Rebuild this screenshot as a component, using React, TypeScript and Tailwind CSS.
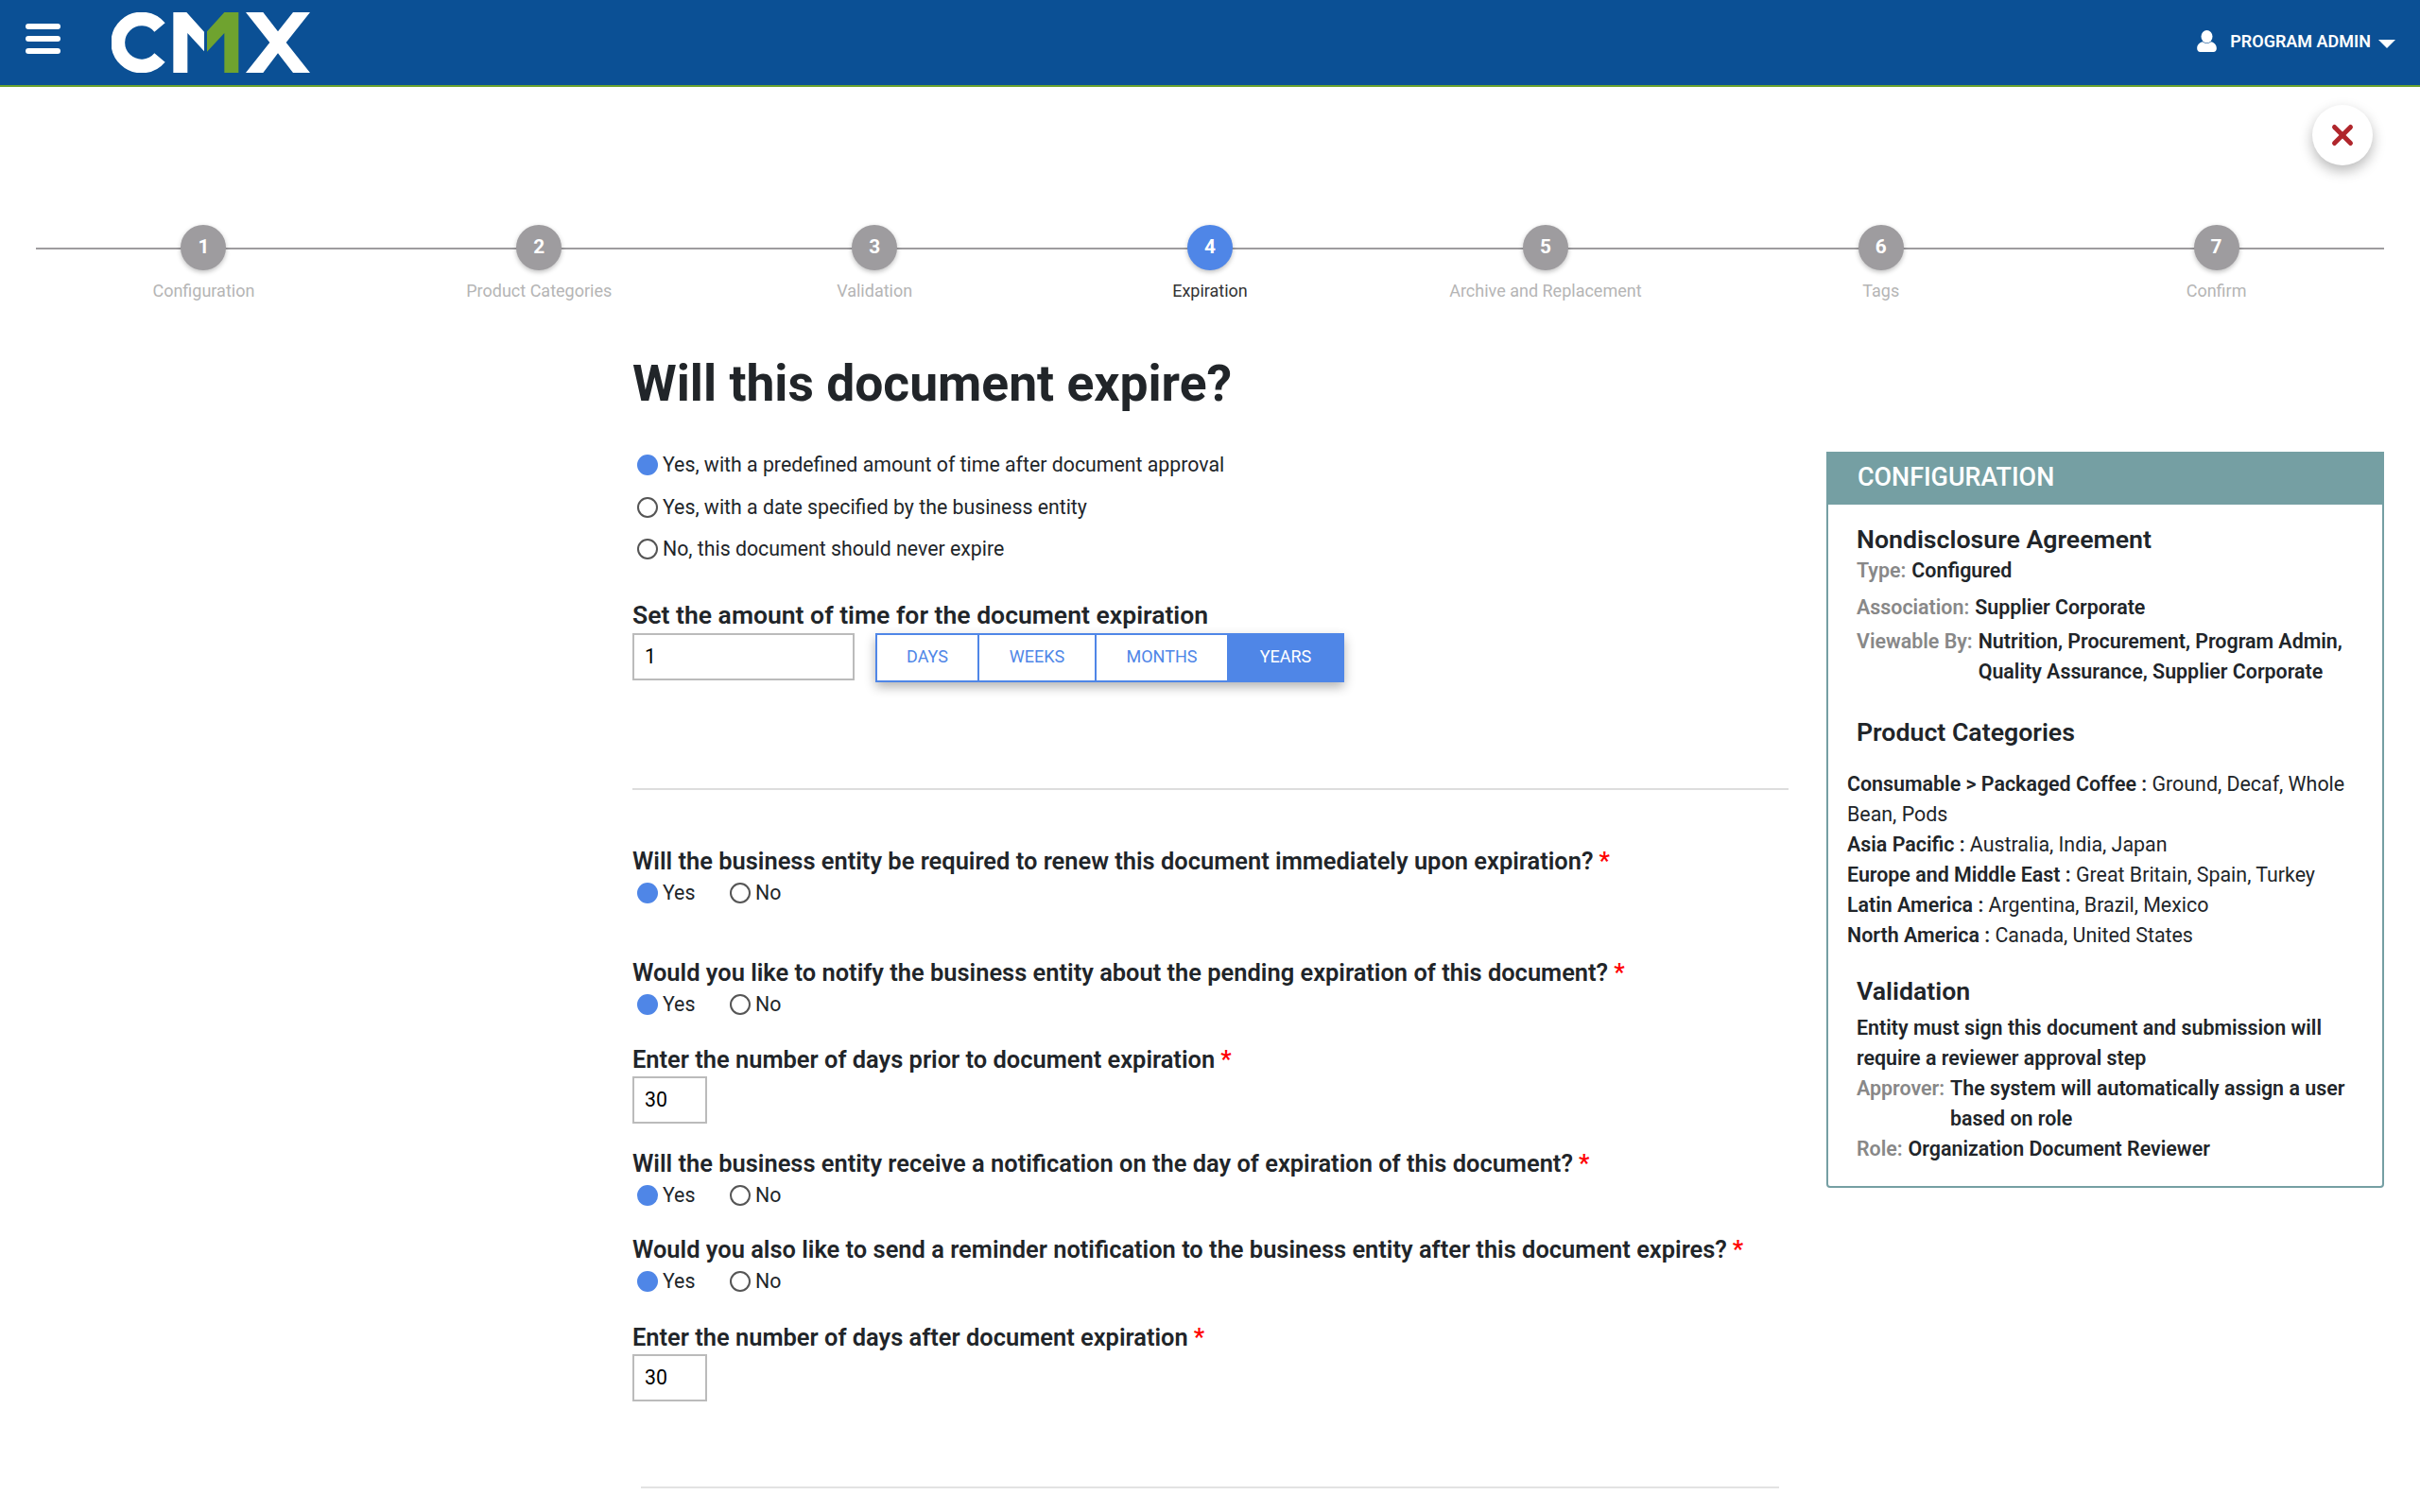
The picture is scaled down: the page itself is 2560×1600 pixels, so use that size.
import { X } from 'lucide-react'

const steps = [
  'Configuration',
  'Product Categories',
  'Validation',
  'Expiration',
  'Archive and Replacement',
  'Tags',
  'Confirm',
]

const expiryOptions = [
  'Yes, with a predefined amount of time after document approval',
  'Yes, with a date specified by the business entity',
  'No, this document should never expire',
]

const units = [
  { name: 'DAYS', width: 'w-[108px]' },
  { name: 'WEEKS', width: 'w-[124px]' },
  { name: 'MONTHS', width: 'w-[140px]' },
]

const categories = [
  { name: 'Asia Pacific :', values: 'Australia, India, Japan' },
  { name: 'Europe and Middle East :', values: 'Great Britain, Spain, Turkey' },
  { name: 'Latin America :', values: 'Argentina, Brazil, Mexico' },
  { name: 'North America :', values: 'Canada, United States' },
]

function Radio({ checked }: { checked?: boolean }) {
  return checked ? (
    <span className="w-[22px] h-[22px] rounded-full bg-[#4f86e7] shrink-0" />
  ) : (
    <span className="w-[22px] h-[22px] rounded-full border-2 border-[#555555] shrink-0" />
  )
}

function YesNo() {
  return (
    <div className="h-[31px] pt-[1px] flex items-center pl-[5px] text-[21.3px] text-[#212529]">
      <Radio checked />
      <span className="ml-[5px] w-[71px]">Yes</span>
      <Radio />
      <span className="ml-[5px]">No</span>
    </div>
  )
}

function Question({ text, className }: { text: string; className: string }) {
  return (
    <div className={`h-[37px] pt-[1px] flex items-center text-[25.45px] font-semibold text-[#212529] ${className}`}>
      {text}
      <span className="ml-[6px] text-[#ff0000]">*</span>
    </div>
  )
}

function DaysInput() {
  return (
    <div className="w-[79px] h-[50px] border-2 border-[#bbbbbb] flex items-center pl-[11px] text-[21.3px] text-black">
      30
    </div>
  )
}

function Logo() {
  return (
    <svg viewBox="0 0 630 192" className="w-[210px] h-[64px]">
      <path d="M153 48A75 75 0 1 0 153 144" fill="none" stroke="#ffffff" strokeWidth="44" />
      <polygon fill="#ffffff" points="196,0 238,0 294,62 294,124 241,66 241,192 196,192" />
      <polygon fill="#6fa32f" points="358,0 403,0 403,192 358,192 358,66 303,125 303,61" />
      <polygon
        fill="#ffffff"
        points="426,0 481,0 528,61 576,0 630,0 554,96 630,192 576,192 528,130 481,192 426,192 502,96"
      />
    </svg>
  )
}

function PersonIcon() {
  return (
    <svg viewBox="0 0 62 69" className="w-[21px] h-[23px]" fill="#ffffff">
      <ellipse cx="31" cy="20" rx="18" ry="20" />
      <path d="M0 58C0 46 8 39 18 37C25 43 37 43 44 37C54 39 62 46 62 58C62 65 58 69 52 69H10C4 69 0 65 0 58Z" />
    </svg>
  )
}

export default function App() {
  return (
    <div className="h-[1600px] overflow-hidden bg-white font-['Roboto',sans-serif]">
      <header className="h-[92px] bg-[#0b5095] border-b-2 border-[#6aa22f] flex items-center">
        <div className="ml-[27px] flex flex-col gap-[7px] -mt-[8px]">
          <div className="w-[37px] h-[6px] rounded-sm bg-white" />
          <div className="w-[37px] h-[6px] rounded-sm bg-white" />
          <div className="w-[37px] h-[6px] rounded-sm bg-white" />
        </div>
        <div className="ml-[54px] flex">
          <Logo />
        </div>
        <div className="ml-auto mr-[26px] flex items-center -mt-[3px] text-white text-[18px] font-semibold">
          <PersonIcon />
          <span className="ml-[14px] mt-[-1px]">PROGRAM ADMIN</span>
          <span className="ml-[8px] mt-[5px] w-0 h-0 border-x-[9px] border-x-transparent border-t-[9px] border-t-white" />
        </div>
      </header>

      <div className="flex justify-end pr-[50px] pt-[19px]">
        <button className="w-[64px] h-[64px] rounded-full bg-white shadow-[0_6px_14px_rgba(0,0,0,0.28)] flex items-center justify-center">
          <X size={34} strokeWidth={3.5} className="text-[#b0262c]" />
        </button>
      </div>

      <div className="relative mt-[63px] ml-[38px] w-[2484px] grid grid-cols-7">
        <div className="absolute left-0 right-0 top-[24px] h-[2px] bg-[#9e9c9f]" />
        {steps.map((step, i) => (
          <div key={step} className="relative flex flex-col items-center">
            <div
              className={`w-[48px] h-[48px] rounded-full flex items-center justify-center text-white text-[20.8px] font-bold shadow-[0_2px_5px_rgba(0,0,0,0.25)] ${
                i === 3 ? 'bg-[#4f86e7]' : 'bg-[#9e9c9f]'
              }`}
            >
              {i + 1}
            </div>
            <div className={`mt-[9px] h-[26px] leading-[26px] text-[18px] ${i === 3 ? 'text-[#333333]' : 'text-[#b5b5b5]'}`}>
              {step}
            </div>
          </div>
        ))}
      </div>

      <div className="mt-[52px] pl-[669px] flex items-start">
        <div className="w-[1223px] shrink-0">
          <h1 className="mt-[1px] h-[64px] leading-[64px] text-[53.4px] font-bold text-[#212529]">Will this document expire?</h1>

          <div className="mt-[32px] flex flex-col gap-[0.5px]">
            {expiryOptions.map((opt, i) => (
              <div key={opt} className="h-[44px] flex items-center pl-[5px] text-[21.3px] text-[#212529]">
                <Radio checked={i === 0} />
                <span className="ml-[5px]">{opt}</span>
              </div>
            ))}
          </div>

          <div className="mt-[30px] h-[36px] flex items-center text-[26.55px] font-semibold text-[#212529]">
            Set the amount of time for the document expiration
          </div>
          <div className="mt-[1px] flex items-start">
            <div className="w-[235px] h-[50px] border-2 border-[#bbbbbb] flex items-center pl-[11px] text-[21.3px] text-black">
              1
            </div>
            <div className="ml-[22px] flex h-[52px] rounded-sm shadow-[0_5px_12px_rgba(0,0,0,0.3)]">
              {units.map((u) => (
                <div
                  key={u.name}
                  className={`${u.width} pb-[3px] border-2 border-r-0 border-[#4f86e7] bg-white flex items-center justify-center text-[18px] text-[#4f86e7]`}
                >
                  {u.name}
                </div>
              ))}
              <div className="w-[124px] pb-[3px] bg-[#4f86e7] flex items-center justify-center text-[18px] text-white">
                YEARS
              </div>
            </div>
          </div>

          <div className="mt-[112px] border-t-2 border-[#dddddd]" />

          <Question className="mt-[56px]" text="Will the business entity be required to renew this document immediately upon expiration?" />
          <YesNo />
          <Question className="mt-[50px]" text="Would you like to notify the business entity about the pending expiration of this document?" />
          <YesNo />
          <Question className="mt-[24px]" text="Enter the number of days prior to document expiration" />
          <DaysInput />
          <Question className="mt-[23px]" text="Will the business entity receive a notification on the day of expiration of this document?" />
          <YesNo />
          <Question className="mt-[23px]" text="Would you also like to send a reminder notification to the business entity after this document expires?" />
          <YesNo />
          <Question className="mt-[25px]" text="Enter the number of days after document expiration" />
          <DaysInput />

          <div className="mt-[90px] ml-[9px] w-[1204px] border-t-2 border-[#e3e3e3]" />
        </div>

        <aside className="ml-[40px] mt-[105px] w-[590px] shrink-0 border-2 border-[#759fa3] rounded-b-[4px] text-[21.4px] leading-[32px] text-[#212529]">
          <div className="-mx-[2px] -mt-[2px] h-[56px] pb-[2px] bg-[#759fa3] flex items-center pl-[33px] text-[26.9px] font-medium text-white">
            CONFIGURATION
          </div>
          <div className="pl-[30px] pr-[28px] pt-[19px] pb-[23px] font-semibold">
            <h3 className="h-[36px] flex items-center text-[26.7px]">Nondisclosure Agreement</h3>
            <div className="h-[30px] flex items-center">
              <span className="text-[#888888]">Type:</span>
              <span className="ml-[6px]">Configured</span>
            </div>
            <div className="mt-[8px] flex">
              <span className="text-[#888888]">Association:</span>
              <span className="ml-[6px]">Supplier Corporate</span>
            </div>
            <div className="mt-[4px] flex">
              <span className="text-[#888888] shrink-0">Viewable By:</span>
              <span className="ml-[6px]">Nutrition, Procurement, Program Admin, Quality Assurance, Supplier Corporate</span>
            </div>

            <h3 className="mt-[30px] h-[36px] flex items-center text-[26.7px]">Product Categories</h3>
            <div className="-ml-[10px] mt-[21px] font-normal">
              <div>
                <span className="font-semibold">Consumable &gt; Packaged Coffee :</span> Ground, Decaf, Whole Bean, Pods
              </div>
              {categories.map((c) => (
                <div key={c.name}>
                  <span className="font-semibold">{c.name}</span> {c.values}
                </div>
              ))}
            </div>

            <h3 className="mt-[25px] h-[36px] flex items-center text-[26.7px]">Validation</h3>
            <div className="mt-[5px]">Entity must sign this document and submission will require a reviewer approval step</div>
            <div className="flex">
              <span className="text-[#888888] shrink-0">Approver:</span>
              <span className="ml-[6px]">The system will automatically assign a user based on role</span>
            </div>
            <div className="flex">
              <span className="text-[#888888]">Role:</span>
              <span className="ml-[6px]">Organization Document Reviewer</span>
            </div>
          </div>
        </aside>
      </div>
    </div>
  )
}
